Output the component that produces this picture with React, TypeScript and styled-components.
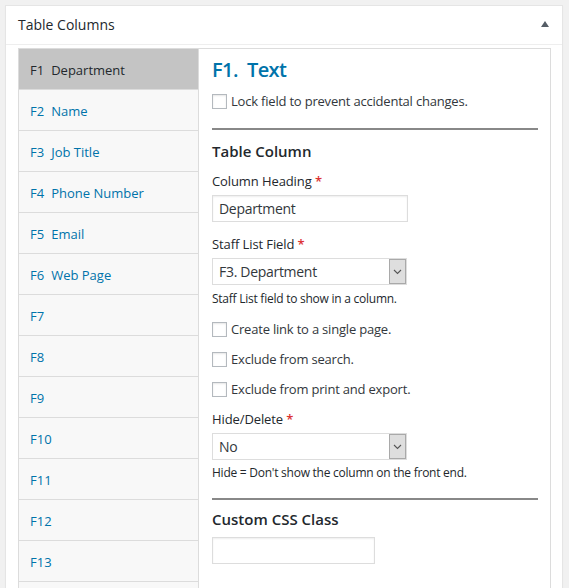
import React from "react";
import styled, { createGlobalStyle } from "styled-components";

const GlobalStyle = createGlobalStyle`
    html, body {
        margin: 0;
        padding: 0;
        background: #f1f1f1;
    }
    body {
        padding: 5px 6px 0 5px;
        font-family: "Open Sans", "Noto Sans", sans-serif;
        color: #23282d;
        overflow: hidden;
    }
`;

// last row is only partly in view, its label sits below the fold
const tabs = [
    { num: "F1", name: "Department" },
    { num: "F2", name: "Name" },
    { num: "F3", name: "Job Title" },
    { num: "F4", name: "Phone Number" },
    { num: "F5", name: "Email" },
    { num: "F6", name: "Web Page" },
    { num: "F7", name: "" },
    { num: "F8", name: "" },
    { num: "F9", name: "" },
    { num: "F10", name: "" },
    { num: "F11", name: "" },
    { num: "F12", name: "" },
    { num: "F13", name: "" },
];

const Chevron = () => (
    <svg width="9" height="6" viewBox="0 0 9 6">
        <path d="M1 1 L4.5 4.5 L8 1" fill="none" stroke="#555" strokeWidth="1.1" />
    </svg>
);

const Select = ({ value }: { value: string }) => (
    <SelectBox>
        <SelectValue>{value}</SelectValue>
        <SelectButton>
            <Chevron />
        </SelectButton>
    </SelectBox>
);

const CheckRow = ({ label, gap }: { label: string; gap: number }) => (
    <CheckLine $gap={gap}>
        <CheckBox />
        <span>{label}</span>
    </CheckLine>
);

export default function App() {
    return (
        <>
            <GlobalStyle />
            <PostBox>
                <BoxHeader>
                    <BoxTitle>Table Columns</BoxTitle>
                    <Toggle />
                </BoxHeader>
                <BoxInside>
                    <TabList>
                        {tabs.map((t, i) => (
                            <Tab key={t.num} $active={i === 0}>
                                <TabNum>{t.num}</TabNum>
                                {t.name}
                            </Tab>
                        ))}
                        <Tab />
                    </TabList>
                    <Panel>
                        <FieldTitle>F1.&nbsp;&nbsp;Text</FieldTitle>
                        <CheckRow label="Lock field to prevent accidental changes." gap={9} />
                        <Divider />
                        <SectionTitle $gap={11}>Table Column</SectionTitle>
                        <Label $gap={11}>
                            Column Heading <Req>*</Req>
                        </Label>
                        <TextInput $width={196} $gap={5} defaultValue="Department" />
                        <Label $gap={13}>
                            Staff List Field <Req>*</Req>
                        </Label>
                        <Select value="F3. Department" />
                        <Hint $gap={6}>Staff List field to show in a column.</Hint>
                        <CheckRow label="Create link to a single page." gap={12} />
                        <CheckRow label="Exclude from search." gap={10} />
                        <CheckRow label="Exclude from print and export." gap={10} />
                        <Label $gap={11}>
                            Hide/Delete <Req>*</Req>
                        </Label>
                        <Select value="No" />
                        <Hint $gap={5}>Hide = Don't show the column on the front end.</Hint>
                        <Divider />
                        <SectionTitle $gap={9}>Custom CSS Class</SectionTitle>
                        <TextInput $width={163} $gap={8} defaultValue="" />
                    </Panel>
                </BoxInside>
            </PostBox>
        </>
    );
}

const PostBox = styled.div`
    width: 558px;
    min-height: 590px;
    box-sizing: border-box;
    background: #fff;
    border: 1px solid #e5e5e5;
    box-shadow: 0 1px 1px rgba(0, 0, 0, 0.04);
`;

const BoxHeader = styled.div`
    display: flex;
    align-items: center;
    justify-content: space-between;
    height: 38px;
    padding: 0 12px;
    border-bottom: 1px solid #eee;
`;

const BoxTitle = styled.h2`
    margin: 0 0 2px;
    font-size: 14px;
    font-weight: 400;
    color: #23282d;
`;

const Toggle = styled.span`
    width: 0;
    height: 0;
    margin: 0 1px 2px 0;
    border-left: 4px solid transparent;
    border-right: 4px solid transparent;
    border-bottom: 6px solid #555d66;
`;

const BoxInside = styled.div`
    display: flex;
    align-items: flex-start;
    padding: 3px 11px 0 12px;
`;

const TabList = styled.ul`
    list-style: none;
    margin: 0;
    padding: 0;
    width: 180px;
    flex-shrink: 0;
    box-sizing: border-box;
    border-left: 1px solid #dcdcdc;
    border-top: 1px solid #dcdcdc;
`;

const Tab = styled.li<{ $active?: boolean }>`
    display: flex;
    align-items: center;
    height: 41px;
    padding: 1px 0 0 11px;
    box-sizing: border-box;
    border-bottom: 1px solid #dcdcdc;
    background: ${(p) => (p.$active ? "#c4c4c4" : "#f8f8f8")};
    color: ${(p) => (p.$active ? "#23282d" : "#0073aa")};
    font-size: 13px;
`;

const TabNum = styled.span`
    margin-right: 7px;
`;

const Panel = styled.div`
    flex: 1;
    min-height: 560px;
    box-sizing: border-box;
    border: 1px solid #dcdcdc;
    padding: 9px 12px 0 13px;
`;

const FieldTitle = styled.h3`
    margin: 0;
    font-size: 20px;
    line-height: 24px;
    font-weight: 600;
    letter-spacing: -0.6px;
    color: #0073aa;
`;

const CheckLine = styled.label<{ $gap: number }>`
    display: flex;
    align-items: center;
    gap: 4px;
    height: 20px;
    margin-top: ${(p) => p.$gap}px;
    font-size: 13px;
    letter-spacing: -0.2px;
    color: #32373c;
`;

const CheckBox = styled.span`
    width: 15px;
    height: 15px;
    box-sizing: border-box;
    border: 1px solid #b4b9be;
    background: #fff;
    box-shadow: inset 0 1px 2px rgba(0, 0, 0, 0.1);
`;

const Divider = styled.hr`
    margin: 17px 0 0;
    border: none;
    height: 2px;
    background: #888;
`;

const SectionTitle = styled.h4<{ $gap: number }>`
    margin: ${(p) => p.$gap}px 0 0;
    font-size: 15px;
    line-height: 20px;
    font-weight: 600;
    color: #23282d;
`;

const Label = styled.div<{ $gap: number }>`
    margin-top: ${(p) => p.$gap}px;
    font-size: 13px;
    line-height: 18px;
    letter-spacing: -0.1px;
    color: #23282d;
`;

const Req = styled.span`
    color: #dc3232;
    font-weight: 600;
`;

const TextInput = styled.input<{ $width: number; $gap: number }>`
    display: block;
    width: ${(p) => p.$width}px;
    height: 27px;
    margin-top: ${(p) => p.$gap}px;
    box-sizing: border-box;
    padding: 0 6px;
    border: 1px solid #ddd;
    box-shadow: inset 0 1px 2px rgba(0, 0, 0, 0.07);
    font-family: inherit;
    font-size: 14px;
    letter-spacing: -0.3px;
    color: #32373c;
    outline: none;
`;

const SelectBox = styled.div`
    display: flex;
    width: 195px;
    height: 27px;
    margin-top: 5px;
    box-sizing: border-box;
    border: 1px solid #ddd;
    background: #fff;
`;

const SelectValue = styled.div`
    flex: 1;
    display: flex;
    align-items: center;
    padding-left: 6px;
    font-size: 14px;
    letter-spacing: -0.3px;
    color: #32373c;
`;

const SelectButton = styled.div`
    width: 17px;
    display: flex;
    align-items: center;
    justify-content: center;
    box-sizing: border-box;
    border: 1px solid #a9a9a9;
    background: #dedede;
`;

const Hint = styled.p<{ $gap: number }>`
    margin: ${(p) => p.$gap}px 0 0;
    font-size: 12px;
    line-height: 16px;
    letter-spacing: -0.25px;
    color: #23282d;
`;
